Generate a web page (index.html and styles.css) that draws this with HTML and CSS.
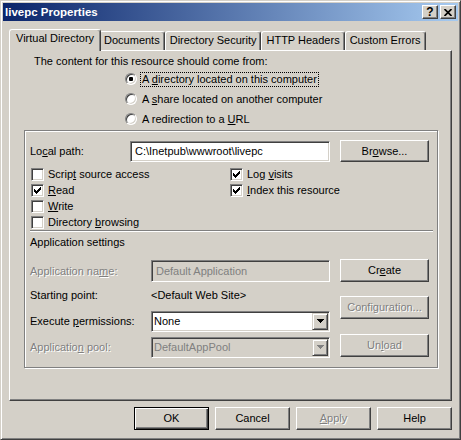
FILE: index.html
```html
<!DOCTYPE html>
<html lang="en">
<head>
    <meta charset="UTF-8">
    <title>livepc Properties</title>
    <link rel="stylesheet" href="styles.css">
</head>
<body>
    <div class="window">
        <div class="titlebar">
            <span class="title">livepc Properties</span>
            <div class="caption-buttons">
                <span class="caption-btn">?</span>
                <span class="caption-btn">
                    <svg width="8" height="7" viewBox="0 0 8 7"><path d="M0.5 0 L7.5 7 M7.5 0 L0.5 7" stroke="#000" stroke-width="1.7"/></svg>
                </span>
            </div>
        </div>

        <div class="content">
            <div class="tabs">
                <div class="tab active">Virtual Directory</div>
                <div class="tab">Documents</div>
                <div class="tab">Directory Security</div>
                <div class="tab">HTTP Headers</div>
                <div class="tab">Custom Errors</div>
            </div>

            <div class="panel">
                <p class="intro">The content for this resource should come from:</p>
                <div class="radios">
                    <div class="radio-row"><span class="radio checked"></span><span class="radio-label focus">A <u>d</u>irectory located on this computer</span></div>
                    <div class="radio-row"><span class="radio"></span><span class="radio-label">A <u>s</u>hare located on another computer</span></div>
                    <div class="radio-row"><span class="radio"></span><span class="radio-label">A redirection to a <u>U</u>RL</span></div>
                </div>

                <div class="groupbox">
                    <div class="path-row">
                        <span>Lo<u>c</u>al path:</span>
                        <div class="textbox">C:\Inetpub\wwwroot\livepc</div>
                        <div class="btn">Br<u>o</u>wse...</div>
                    </div>

                    <div class="checks">
                        <div class="check-col">
                            <div class="check-row"><span class="checkbox"></span><span>Scrip<u>t</u> source access</span></div>
                            <div class="check-row"><span class="checkbox"><svg viewBox="1 1 11 11"><path d="M3 5H4V6H5V7H6V6H7V5H8V4H9V3H10V6H9V7H8V8H7V9H6V10H5V9H4V8H3Z"/></svg></span><span><u>R</u>ead</span></div>
                            <div class="check-row"><span class="checkbox"></span><span><u>W</u>rite</span></div>
                            <div class="check-row"><span class="checkbox"></span><span>Directory <u>b</u>rowsing</span></div>
                        </div>
                        <div class="check-col">
                            <div class="check-row"><span class="checkbox"><svg viewBox="1 1 11 11"><path d="M3 5H4V6H5V7H6V6H7V5H8V4H9V3H10V6H9V7H8V8H7V9H6V10H5V9H4V8H3Z"/></svg></span><span>Log <u>v</u>isits</span></div>
                            <div class="check-row"><span class="checkbox"><svg viewBox="1 1 11 11"><path d="M3 5H4V6H5V7H6V6H7V5H8V4H9V3H10V6H9V7H8V8H7V9H6V10H5V9H4V8H3Z"/></svg></span><span><u>I</u>ndex this resource</span></div>
                        </div>
                    </div>

                    <div class="separator"></div>
                    <div class="section-title">Application settings</div>

                    <div class="app">
                        <div class="app-fields">
                            <span class="disabled-text">Application na<u>m</u>e:</span>
                            <div class="textbox disabled">Default Application</div>

                            <span>Starting point:</span>
                            <span>&lt;Default Web Site&gt;</span>

                            <span>Execute <u>p</u>ermissions:</span>
                            <div class="combo">
                                <span class="combo-text">None</span>
                                <span class="combo-arrow"><svg width="7" height="4" viewBox="0 0 7 4"><path d="M0 0H7V1H6V2H5V3H4V4H3V3H2V2H1V1H0Z"/></svg></span>
                            </div>

                            <span class="disabled-text">Applicatio<u>n</u> pool:</span>
                            <div class="combo disabled">
                                <span class="combo-text">DefaultAppPool</span>
                                <span class="combo-arrow"><svg width="7" height="4" viewBox="0 0 7 4"><path d="M0 0H7V1H6V2H5V3H4V4H3V3H2V2H1V1H0Z"/></svg></span>
                            </div>
                        </div>
                        <div class="app-buttons">
                            <div class="btn">Cr<u>e</u>ate</div>
                            <div class="btn disabled-text">Configuration...</div>
                            <div class="btn disabled-text">Un<u>l</u>oad</div>
                        </div>
                    </div>
                </div>
            </div>

            <div class="dialog-buttons">
                <div class="btn default">OK</div>
                <div class="btn">Cancel</div>
                <div class="btn disabled-text"><u>A</u>pply</div>
                <div class="btn">Help</div>
            </div>
        </div>
    </div>
</body>
</html>
```

FILE: styles.css
```css
* {
    margin: 0;
    padding: 0;
    box-sizing: border-box;
}

body {
    font-family: "Liberation Sans", Arial, sans-serif;
    font-size: 11px;
    color: #000;
    background-color: #d4d0c8;
}

.window {
    width: 461px;
    height: 440px;
    background-color: #d4d0c8;
    border: 1px solid;
    border-color: #d4d0c8 #404040 #404040 #d4d0c8;
    box-shadow: inset 1px 1px #fff, inset -1px -1px #808080;
    padding: 2px;
}

.titlebar {
    height: 18px;
    display: flex;
    align-items: center;
    justify-content: space-between;
    padding: 0 2px;
    background: linear-gradient(to right, #0a246a, #a6caf0);
}

.title {
    color: #fff;
    font-weight: bold;
    font-size: 11.5px;
}

.caption-buttons {
    display: flex;
    gap: 2px;
}

.caption-btn {
    width: 16px;
    height: 14px;
    display: flex;
    align-items: center;
    justify-content: center;
    background-color: #d4d0c8;
    border: 1px solid;
    border-color: #fff #404040 #404040 #fff;
    box-shadow: inset -1px -1px #808080;
    font-weight: bold;
    font-size: 12px;
}

.content {
    padding: 8px 6px 0;
}

/* tabs */
.tabs {
    display: flex;
    align-items: flex-end;
    height: 21px;
    padding-left: 2px;
}

.tab {
    height: 19px;
    padding: 0 4px;
    line-height: 17px;
    white-space: nowrap;
    border: 1px solid;
    border-bottom: none;
    border-color: #fff #404040 #fff #fff;
    border-radius: 3px 3px 0 0;
    box-shadow: inset -1px 0 #808080;
}

.tab.active {
    height: 22px;
    margin: 0 -2px -1px;
    padding: 0 6px;
    position: relative;
    z-index: 1;
    background-color: #d4d0c8;
}

.panel {
    height: 351px;
    border: 1px solid;
    border-color: #fff #404040 #404040 #fff;
    box-shadow: inset -1px -1px #808080;
    padding: 4px 13px 0 14px;
}

.intro {
    line-height: 13px;
    margin-left: 10px;
}

.radios {
    margin: 1px 0 0 101px;
}

.radio-row {
    display: flex;
    align-items: center;
    height: 20px;
}

.radio {
    width: 12px;
    height: 12px;
    border-radius: 50%;
    background-color: #fff;
    border: 1px solid;
    border-color: #808080 #fff #fff #808080;
    box-shadow: inset 1px 1px #404040, inset -1px -1px #d4d0c8;
}

.radio.checked::after {
    content: "";
    display: block;
    width: 4px;
    height: 4px;
    margin: 3px;
    border-radius: 1px;
    background-color: #000;
}

.radio-label {
    margin-left: 3px;
    padding: 0 1px;
    line-height: 13px;
    border: 1px solid transparent;
}

.radio-label.focus {
    border: 1px dotted #000;
}

/* group box */
.groupbox {
    margin-top: 1px;
    border: 1px solid #808080;
    box-shadow: inset 1px 1px #fff, 1px 1px #fff;
    padding: 9px 8px 7px 5px;
}

.path-row {
    display: grid;
    grid-template-columns: 100px 200px 99px;
    align-items: center;
    height: 22px;
}

.path-row .btn {
    margin-left: 10px;
}

.textbox {
    height: 21px;
    padding: 0 4px;
    line-height: 19px;
    white-space: nowrap;
    background-color: #fff;
    border: 1px solid;
    border-color: #808080 #fff #fff #808080;
    box-shadow: inset 1px 1px #404040, inset -1px -1px #d4d0c8;
}

.textbox.disabled {
    height: 22px;
    line-height: 20px;
    background-color: #d4d0c8;
    color: #808080;
}

.btn {
    height: 22px;
    line-height: 20px;
    text-align: center;
    background-color: #d4d0c8;
    border: 1px solid;
    border-color: #fff #404040 #404040 #fff;
    box-shadow: inset -1px -1px #808080;
}

.btn.default {
    border-color: #000;
    box-shadow: inset 1px 1px #fff, inset -1px -1px #404040, inset -2px -2px #808080;
}

.disabled-text {
    color: #808080;
    text-shadow: 1px 1px 0 #fff;
}

.checks {
    display: flex;
    margin-top: 4px;
    padding-left: 1px;
}

.check-col {
    width: 200px;
}

.check-row {
    display: flex;
    align-items: center;
    height: 16px;
}

.checkbox {
    width: 13px;
    height: 13px;
    margin-right: 4px;
    background-color: #fff;
    border: 1px solid;
    border-color: #808080 #fff #fff #808080;
    box-shadow: inset 1px 1px #404040, inset -1px -1px #d4d0c8;
}

.checkbox svg {
    display: block;
    width: 11px;
    height: 11px;
}

.separator {
    height: 2px;
    margin-right: -4px;
    border-top: 1px solid #808080;
    border-bottom: 1px solid #fff;
}

.section-title {
    margin-top: 4px;
    line-height: 13px;
}

/* application settings */
.app {
    display: flex;
    justify-content: space-between;
    margin-top: 10px;
}

.app-fields {
    display: grid;
    grid-template-columns: 121px 179px;
    grid-template-rows: 23px 26px 26px 26px;
    align-items: center;
}

.app-buttons {
    display: flex;
    flex-direction: column;
    width: 89px;
}

.app-buttons .btn {
    height: 23px;
    line-height: 21px;
    margin-top: 14px;
}

.app-buttons .btn:first-child {
    margin-top: 0;
}

.app-buttons .btn:last-child {
    margin-top: 15px;
}

.combo {
    display: flex;
    height: 21px;
    padding: 1px;
    background-color: #fff;
    border: 1px solid;
    border-color: #808080 #fff #fff #808080;
    box-shadow: inset 1px 1px #404040, inset -1px -1px #d4d0c8;
}

.combo-text {
    flex: 1;
    padding-left: 1px;
    line-height: 17px;
}

.combo-arrow {
    width: 16px;
    display: flex;
    align-items: center;
    justify-content: center;
    background-color: #d4d0c8;
    border: 1px solid;
    border-color: #d4d0c8 #404040 #404040 #d4d0c8;
    box-shadow: inset 1px 1px #fff, inset -1px -1px #808080;
}

.combo.disabled {
    background-color: #d4d0c8;
    color: #808080;
}

.combo.disabled .combo-arrow path {
    fill: #808080;
}

/* bottom buttons */
.dialog-buttons {
    display: flex;
    justify-content: flex-end;
    gap: 6px;
    margin-top: 6px;
}

.dialog-buttons .btn {
    width: 75px;
    height: 23px;
    line-height: 21px;
}
```
